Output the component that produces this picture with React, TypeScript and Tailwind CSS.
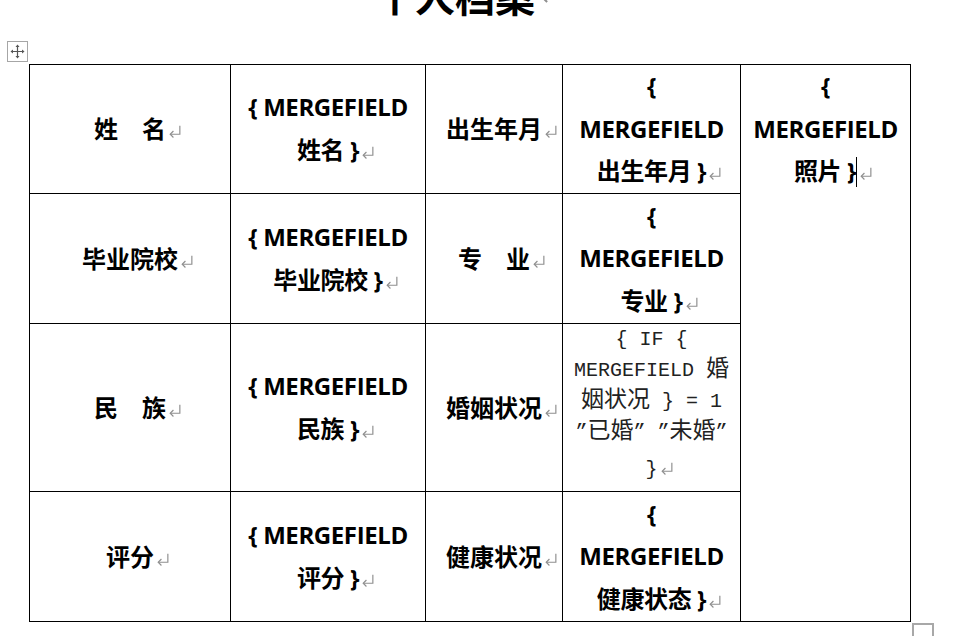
const SANS = "font-['Open_Sans','Noto_Sans_CJK_SC',sans-serif]";

// marca de parágrafo do Word (↵), não conta para a centragem do texto
function Mark({ size = 15, className = '' }: { size?: number; className?: string }) {
  return (
    <span className={`inline-block w-0 whitespace-nowrap align-baseline ${className}`}>
      <svg width={size} height={size} viewBox="0 0 14 14" className="ml-[1px] block">
        <path d="M12 2.5v8H3" fill="none" stroke="#8f8f8f" strokeWidth="1.1" />
        <path d="M6 7.5l-3 3 3 3" fill="none" stroke="#8f8f8f" strokeWidth="1.1" />
      </svg>
    </span>
  );
}

function MoveHandle() {
  return (
    <div className="ml-[7px] mt-[26px] flex h-[21px] w-[21px] items-center justify-center border border-[#a6a6a6] bg-white">
      <svg width="15" height="15" viewBox="0 0 15 15">
        <path d="M7.5 2.5v10M2.5 7.5h10" stroke="#555" strokeWidth="1.2" />
        <path d="M7.5 0.5l2 2.5h-4zM7.5 14.5l2-2.5h-4zM0.5 7.5l2.5-2v4zM14.5 7.5l-2.5-2v4z" fill="#555" />
      </svg>
    </div>
  );
}

function Lines({ lines, cursor }: { lines: string[]; cursor?: boolean }) {
  return (
    <div className="whitespace-nowrap tracking-[-0.4px]">
      {lines.map((l, i) => (
        <div key={i} className="h-[42.67px] leading-[42.67px]">
          {l}
          {i === lines.length - 1 && (
            <>
              {cursor && <span className="relative inline-block h-[30px] w-0 align-[-7px] border-l border-black" />}
              <Mark />
            </>
          )}
        </div>
      ))}
    </div>
  );
}

function Label({ text }: { text: string }) {
  return (
    <span className="whitespace-nowrap">
      {text}
      <Mark />
    </span>
  );
}

function Cj({ children }: { children: string }) {
  return <span className="font-['Noto_Sans_CJK_SC',sans-serif] text-[23px] leading-none">{children}</span>;
}

function MarriageField() {
  const line = 'h-[31px] leading-[31px]';
  return (
    <div className="whitespace-pre font-['Liberation_Mono','Noto_Sans_CJK_SC',monospace] text-[20px] font-normal text-[#222]">
      <div className={line}>{'{ IF {'}</div>
      <div className={line}>MERGEFIELD <Cj>婚</Cj></div>
      <div className={line}><Cj>姻状况</Cj>{' } = 1'}</div>
      <div className={line}>”<Cj>已婚</Cj>” ”<Cj>未婚</Cj>”</div>
      <div className="h-[43px] leading-[43px]">
        {'}'}
        <Mark />
      </div>
    </div>
  );
}

const td = 'border border-black px-[7px] py-0 align-middle';

const rows = [
  { h: 'h-[129px]', a: '姓　名', b: ['{ MERGEFIELD', '姓名 }'], c: '出生年月', d: ['{', 'MERGEFIELD', '出生年月 }'] },
  { h: 'h-[130px]', a: '毕业院校', b: ['{ MERGEFIELD', '毕业院校 }'], c: '专　业', d: ['{', 'MERGEFIELD', '专业 }'] },
  { h: 'h-[168px]', a: '民　族', b: ['{ MERGEFIELD', '民族 }'], c: '婚姻状况', d: null },
  { h: 'h-[130px]', a: '评分', b: ['{ MERGEFIELD', '评分 }'], c: '健康状况', d: ['{', 'MERGEFIELD', '健康状态 }'] },
];

export default function App() {
  return (
    <div className={`h-[636px] w-[963px] overflow-hidden bg-white text-black ${SANS}`}>
      <h1 className="-mt-[25px] h-[40px] whitespace-nowrap pl-[375px] text-[40px] font-bold leading-[40px] font-['Noto_Sans_CJK_SC',sans-serif]">
        个人档案
        <Mark size={26} className="relative -top-[9px]" />
      </h1>

      <MoveHandle />

      <table className="ml-[29px] mt-[2px] table-fixed border-collapse text-center text-[24px] font-bold">
        <colgroup>
          <col className="w-[201px]" />
          <col className="w-[195px]" />
          <col className="w-[137px]" />
          <col className="w-[178px]" />
          <col className="w-[170px]" />
        </colgroup>
        <tbody>
          {rows.map((r, i) => (
            <tr key={i} className={r.h}>
              <td className={td}>
                <Label text={r.a} />
              </td>
              <td className={td}>
                <Lines lines={r.b} />
              </td>
              <td className={td}>
                <Label text={r.c} />
              </td>
              <td className={td}>{r.d ? <Lines lines={r.d} /> : <MarriageField />}</td>
              {i === 0 && (
                <td rowSpan={4} className="border border-black px-[7px] py-0 align-top">
                  <Lines lines={['{', 'MERGEFIELD', '照片 }']} cursor />
                </td>
              )}
            </tr>
          ))}
        </tbody>
      </table>

      <div className="ml-[912px] mt-[1px] h-[22px] w-[22px] border-2 border-[#a8a8a8]" />
    </div>
  );
}
